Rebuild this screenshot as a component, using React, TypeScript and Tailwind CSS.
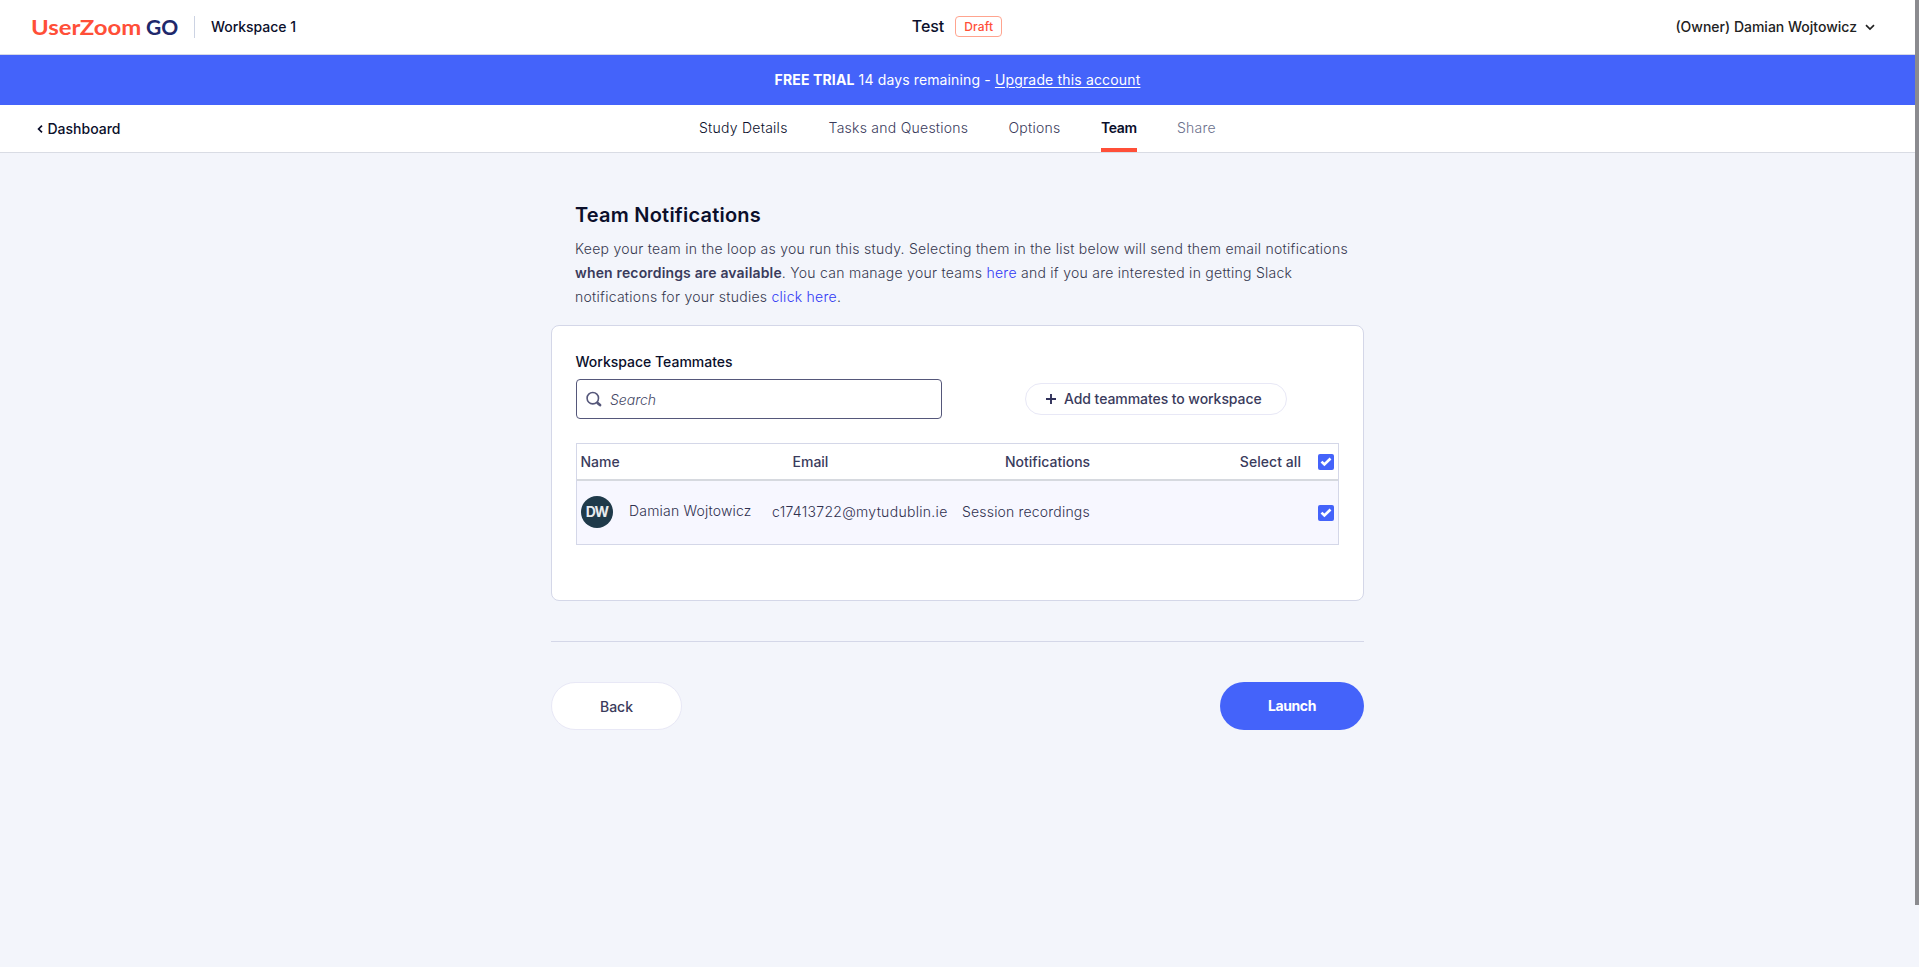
import type { ReactNode } from "react";

function Checkbox() {
  return (
    <span className="flex size-4 items-center justify-center rounded-xs bg-[#4463fa]">
      <svg width="12" height="10" viewBox="0 0 12 10" fill="none" stroke="#fff" strokeWidth="2.7">
        <path d="M1.5 4.6 4.4 7.4 10.5 1.6" />
      </svg>
    </span>
  );
}

function Logo() {
  return (
    <div className="flex h-[54px] items-center pb-0.5 font-['Lato',sans-serif] text-[21px] leading-none font-bold">
      <span className="w-[115px] origin-left scale-x-[1.14] text-[#ff4f38]">UserZoom</span>
      <span className="w-[47px] origin-left scale-x-[1] text-[#20286b]">GO</span>
    </div>
  );
}

function Header() {
  return (
    <header className="grid h-[55px] grid-cols-3 items-center border-b border-[#d5d8e6] bg-white text-sm font-medium text-[#0b0f2b]">
      <div className="flex items-center pl-[31px]">
        <Logo />
        <span className="ml-px h-[22px] w-px bg-[#ccd3e3]" />
        <span className="ml-4 tracking-[-0.04px]">Workspace 1</span>
      </div>
      <div className="flex items-center justify-center gap-[11px] pb-px">
        <span className="-ml-px pb-px text-base font-medium tracking-[-0.05px]">Test</span>
        <span className="flex h-[21px] w-[47px] items-center justify-center rounded border border-[#ffa48f] text-xs font-medium tracking-[0.15px] text-[#ff4f38]">
          Draft
        </span>
      </div>
      <div className="flex items-center justify-end gap-2 pr-10 text-[#222]">
        <span>(Owner) Damian Wojtowicz</span>
        <svg width="10" height="7" viewBox="0 0 10 7" fill="none" stroke="#222" strokeWidth="1.7">
          <path d="M1 1.2 5 5 9 1.2" />
        </svg>
      </div>
    </header>
  );
}

function Tab({ children, className }: { children: ReactNode; className: string }) {
  return <a className={`flex h-[47px] items-center whitespace-nowrap ${className}`}>{children}</a>;
}

function SubNav() {
  return (
    <nav className="grid h-12 grid-cols-[1fr_auto_1fr] border-b border-[#d9dce4] bg-white text-sm">
      <a className="flex h-[47px] items-center gap-[5px] pt-px pl-[36.5px] font-medium text-[#0b0f2b]">
        <svg width="6" height="8" viewBox="0 0 6 8" fill="none" stroke="#0b0f2b" strokeWidth="1.7">
          <path d="M5 .7 1.6 4 5 7.3" />
        </svg>
        Dashboard
      </a>
      <div className="flex gap-10 font-light tracking-[0.25px]">
        <Tab className="w-[89.5px] pb-px text-[#0b0f2b]">Study Details</Tab>
        <Tab className="w-[140px] pb-px text-[#3a3b5c]">Tasks and Questions</Tab>
        <Tab className="w-[52.5px] pb-px text-[#3a3b5c]">Options</Tab>
        <Tab className="w-9 border-b-4 border-[#ff4f38] pt-[3px] font-semibold tracking-[-0.35px] text-[#0b0f2b]">Team</Tab>
        <Tab className="w-[39px] pb-px text-[#6b708c]">Share</Tab>
      </div>
      <span />
    </nav>
  );
}

function TeammatesTable() {
  return (
    <div className="mt-6 border border-[#d4d7e8] text-sm text-[#3a3b5c]">
      <div className="flex h-[37px] items-center border-b-2 border-[#d6d9df] pr-1 pl-[3.5px] font-medium">
        <span className="w-[212px]">Name</span>
        <span className="w-[212.5px]">Email</span>
        <span className="flex-1">Notifications</span>
        <span className="mr-[17px] tracking-[0.06px]">Select all</span>
        <Checkbox />
      </div>
      <div className="flex h-[63px] items-center bg-[#f7f7ff] pr-1 pb-0.5 pl-1 font-light text-[#30314f]">
        <span className="flex size-8 items-center justify-center rounded-full bg-[#1f3a4a] text-sm font-bold tracking-[-0.9px] text-[#e8ebee]">
          DW
        </span>
        <span className="-mt-0.5 ml-4 w-[143px] tracking-[0.19px]">Damian Wojtowicz</span>
        <span className="w-[190px] tracking-[0.3px]">c17413722@mytudublin.ie</span>
        <span className="flex-1 tracking-[0.18px]">Session recordings</span>
        <span className="mt-0.5">
          <Checkbox />
        </span>
      </div>
    </div>
  );
}

export default function App() {
  return (
    <div className="flex h-[967px] w-[1919px] bg-[#f3f5fb] font-['Inter',sans-serif]">
      <div className="w-[1915px]">
        <Header />
        <div className="flex h-[50px] items-center justify-center bg-[#4463fa] text-sm whitespace-pre text-white">
          <b className="tracking-[0.14px]">FREE TRIAL</b>
          <span className="tracking-[0.13px]"> 14 days remaining - </span>
          <a className="tracking-[0.16px] underline underline-offset-2">Upgrade this account</a>
        </div>
        <SubNav />
        <main className="mx-auto w-[813px] pt-[46px]">
          <section className="px-6">
            <h1 className="text-xl leading-8 font-semibold tracking-[0.22px] text-[#0b0f2b]">Team Notifications</h1>
            <p className="mt-1.5 text-sm leading-6 font-light tracking-[0.265px] whitespace-nowrap text-[#36384f]">
              Keep your team in the loop as you run this study. Selecting them in the list below will send them email notifications
              <br />
              <strong className="font-semibold tracking-[0.16px] text-[#3a3b5c]">when recordings are available</strong>. You can manage your teams{" "}
              <a className="text-[#3038f5]">here</a> and if you are interested in getting Slack
              <br />
              notifications for your studies <a className="text-[#3038f5]">click here</a>.
            </p>
          </section>
          <section className="mt-4 h-[276px] rounded-lg border border-[#d4d7e8] bg-white px-6 pt-[26px]">
            <div className="-ml-[0.5px] text-sm leading-5 font-medium text-[#0b0f2b]">Workspace Teammates</div>
            <div className="mt-[7px] flex items-center">
              <div className="flex h-10 w-[366px] items-center gap-2 rounded border border-[#55577a] pl-[9px] text-sm font-light text-[#454765] italic">
                <svg width="16" height="16" viewBox="0 0 16 16" fill="none" stroke="#55577a" strokeLinecap="round">
                  <circle cx="6.8" cy="7.2" r="5.7" strokeWidth="1.6" />
                  <path d="M11.6 12 14 14" strokeWidth="2.8" />
                </svg>
                <span className="pt-px">Search</span>
              </div>
              <button className="ml-[83px] flex h-8 w-[262px] items-center gap-2 rounded-full border border-[#e8e8f6] pl-5 text-sm font-medium tracking-[-0.07px] whitespace-nowrap text-[#3a3b5c]">
                <svg width="10" height="10" viewBox="0 0 10 10" stroke="#30315a" strokeWidth="1.9">
                  <path d="M5 0v10M0 5h10" />
                </svg>
                Add teammates to workspace
              </button>
            </div>
            <TeammatesTable />
          </section>
          <hr className="mt-10 border-[#d4d7e8]" />
          <div className="mt-10 flex justify-between text-sm">
            <button className="h-12 w-[131px] rounded-full border border-[#e8e8f6] bg-white pt-px font-medium text-[#3a3b5c]">Back</button>
            <button className="h-12 w-36 rounded-full bg-[#4463fa] font-bold tracking-[-0.4px] text-white">Launch</button>
          </div>
        </main>
      </div>
      <div className="h-[905px] w-1 bg-[#8b8b8f]" />
    </div>
  );
}
